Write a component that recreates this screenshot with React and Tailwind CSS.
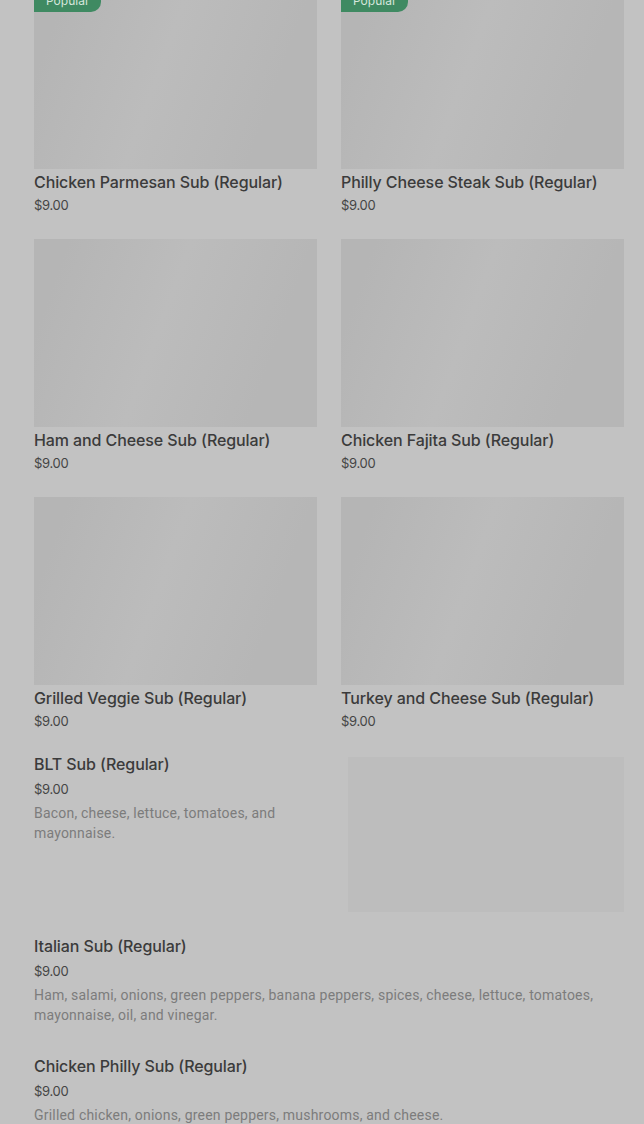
import React from "react";

const gridItems = [
  { name: "Chicken Parmesan Sub (Regular)", price: "$9.00", popular: true },
  { name: "Philly Cheese Steak Sub (Regular)", price: "$9.00", popular: true },
  { name: "Ham and Cheese Sub (Regular)", price: "$9.00" },
  { name: "Chicken Fajita Sub (Regular)", price: "$9.00" },
  { name: "Grilled Veggie Sub (Regular)", price: "$9.00" },
  { name: "Turkey and Cheese Sub (Regular)", price: "$9.00" },
];

function GridCard({ item }) {
  return (
    <div className="flex flex-col">
      <div className="relative h-[188px] bg-[linear-gradient(110deg,#b5b5b5_10%,#bcbcbc_45%,#b6b6b6_80%)]">
        {item.popular && (
          <span className="absolute left-0 top-[8px] h-[23px] px-3 flex items-center rounded-r-[10px] bg-[#3f8a62] text-[12px] text-[#d6e6dc]">
            Popular
          </span>
        )}
      </div>
      <div className="mt-[2px] text-[16px] leading-[22px] font-medium tracking-[-0.1px] text-[#3b3b3b]">{item.name}</div>
      <div className="text-[13px] leading-[24px] text-[#454545] tracking-[-0.3px]">{item.price}</div>
    </div>
  );
}

function ListItem({ name, price, desc, image, className }) {
  return (
    <div className={`flex gap-6 ${className}`}>
      <div className="flex-1 min-w-0">
        <div className="text-[16px] leading-[22px] font-medium tracking-[-0.1px] text-[#3b3b3b]">{name}</div>
        <div className="mt-[3px] text-[13px] leading-[22px] text-[#454545] tracking-[-0.3px]">{price}</div>
        <div className="mt-[3px] text-[14px] leading-[20px] tracking-[0.2px] text-[#7c7c7c] font-['Roboto',sans-serif]">{desc}</div>
      </div>
      {image && <div className="w-[276px] h-[155px] mt-[4px] shrink-0 bg-[#bdbdbd]" />}
    </div>
  );
}

export default function App() {
  return (
    <div className="min-h-[1124px] bg-[#c2c2c2] font-['Inter',sans-serif] overflow-hidden">
      <div className="pl-[34px] pr-[20px] -mt-[19px]">
        <div className="grid grid-cols-2 gap-x-6 gap-y-[22px]">
          {gridItems.map((item) => (
            <GridCard key={item.name} item={item} />
          ))}
        </div>
        <ListItem
          className="mt-[20px]"
          name="BLT Sub (Regular)"
          price="$9.00"
          desc="Bacon, cheese, lettuce, tomatoes, and mayonnaise."
          image
        />
        <ListItem
          className="mt-[23px]"
          name="Italian Sub (Regular)"
          price="$9.00"
          desc="Ham, salami, onions, green peppers, banana peppers, spices, cheese, lettuce, tomatoes, mayonnaise, oil, and vinegar."
        />
        <ListItem
          className="mt-[30px]"
          name="Chicken Philly Sub (Regular)"
          price="$9.00"
          desc="Grilled chicken, onions, green peppers, mushrooms, and cheese."
        />
      </div>
    </div>
  );
}
